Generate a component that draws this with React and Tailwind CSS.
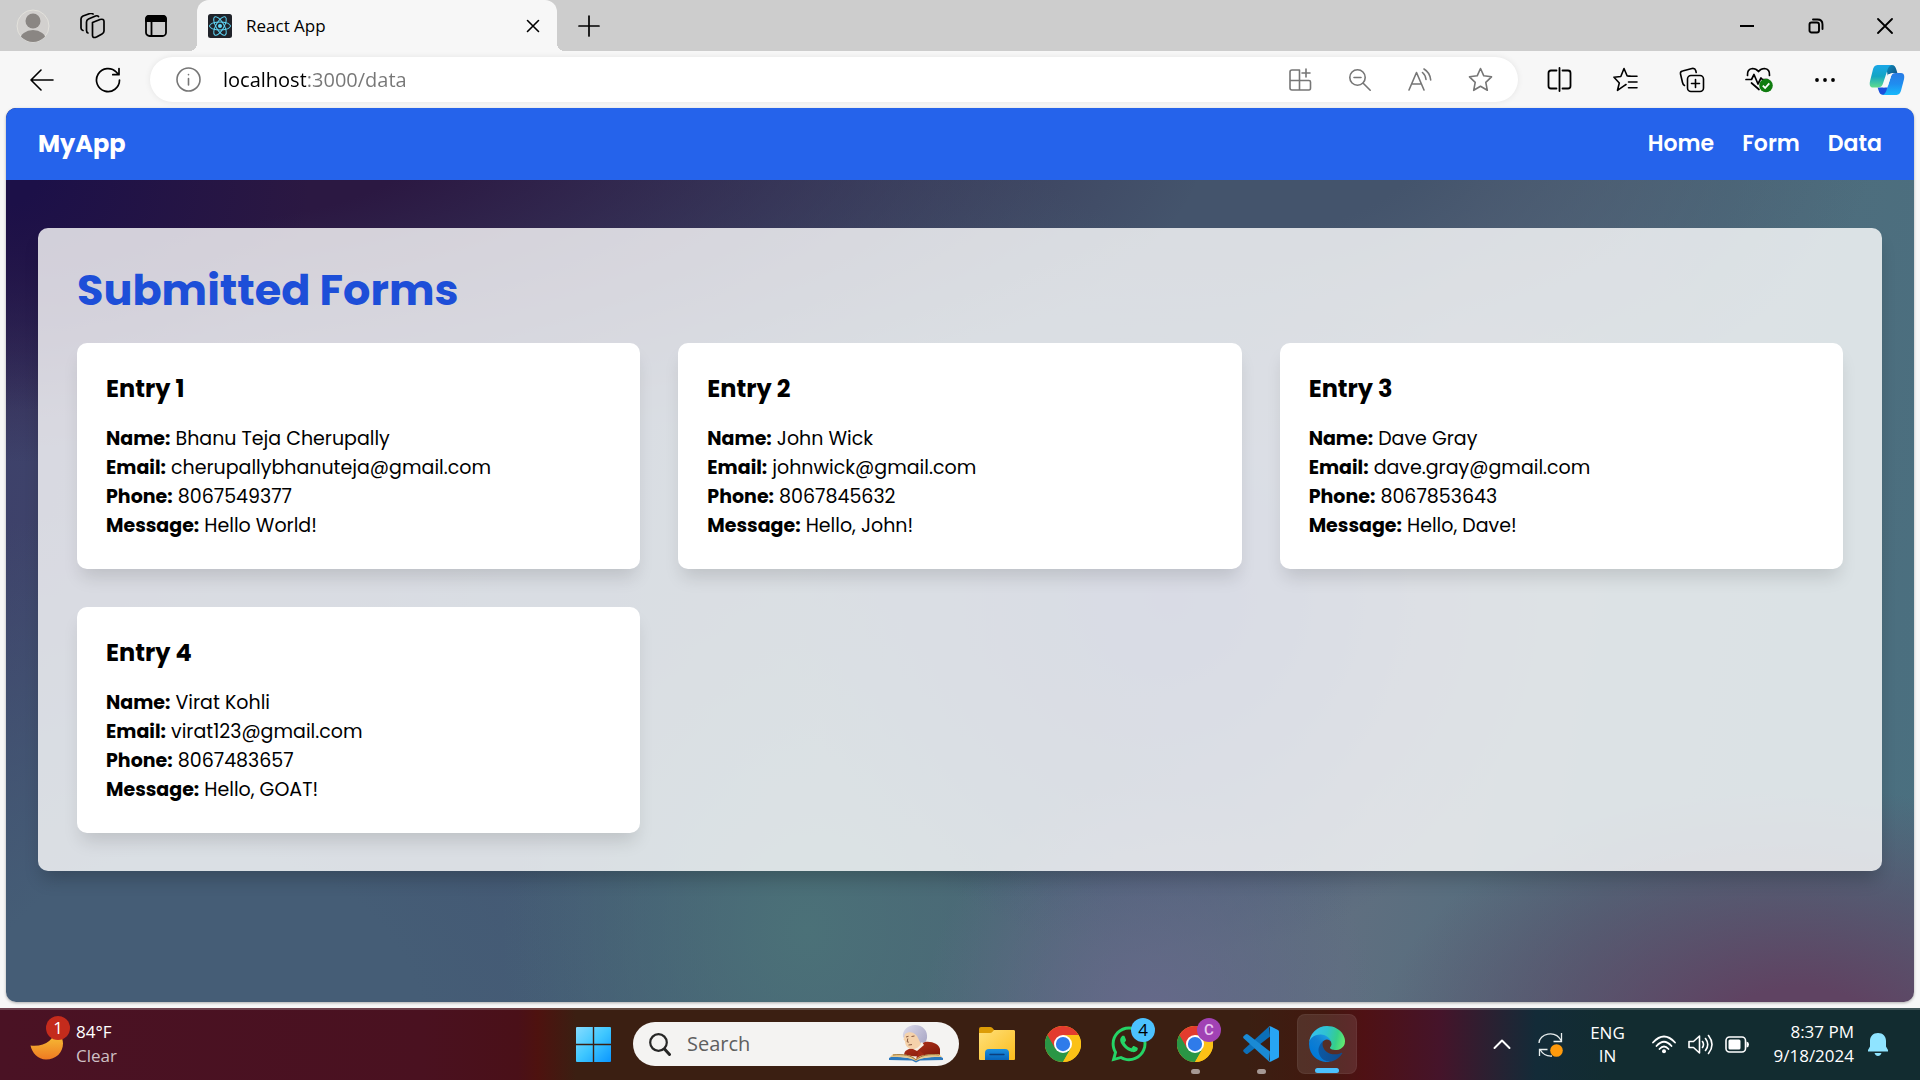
import React from "react";
import { FaWhatsapp } from "react-icons/fa";

const uiFont = "font-['Open_Sans','Noto_Sans',sans-serif]";
const appFont = "font-['Poppins','Inter',sans-serif]";

const entries = [
  { name: "Bhanu Teja Cherupally", email: "cherupallybhanuteja@gmail.com", phone: "8067549377", message: "Hello World!" },
  { name: "John Wick", email: "johnwick@gmail.com", phone: "8067845632", message: "Hello, John!" },
  { name: "Dave Gray", email: "dave.gray@gmail.com", phone: "8067853643", message: "Hello, Dave!" },
  { name: "Virat Kohli", email: "virat123@gmail.com", phone: "8067483657", message: "Hello, GOAT!" },
];

function Line({ size = 24, width = 1.5, className = "", children, box = 24 }) {
  return (
    <svg
      width={size}
      height={size}
      viewBox={`0 0 ${box} ${box}`}
      fill="none"
      stroke="currentColor"
      strokeWidth={width}
      strokeLinecap="round"
      strokeLinejoin="round"
      className={className}
      aria-hidden="true"
    >
      {children}
    </svg>
  );
}

function IconButton({ label, className = "", children }) {
  return (
    <button type="button" aria-label={label} className={`flex shrink-0 items-center justify-center ${className}`}>
      {children}
    </button>
  );
}

function ProfileIcon() {
  return (
    <svg width="34" height="34" viewBox="0 0 34 34" aria-hidden="true">
      <clipPath id="avatar">
        <circle cx="17" cy="17" r="16" />
      </clipPath>
      <circle cx="17" cy="17" r="16" fill="#d2d0ce" stroke="#e3e2dc" />
      <g clipPath="url(#avatar)" fill="#8a8683">
        <circle cx="17" cy="12" r="7.5" />
        <ellipse cx="17" cy="31" rx="13" ry="10" />
      </g>
    </svg>
  );
}

function ReactLogo() {
  return (
    <svg width="24" height="24" viewBox="0 0 24 24" aria-hidden="true">
      <rect width="24" height="24" rx="2.5" fill="#20232a" />
      <g fill="none" stroke="#61dafb" strokeWidth="1">
        <ellipse cx="12" cy="12" rx="10.5" ry="4" />
        <ellipse cx="12" cy="12" rx="10.5" ry="4" transform="rotate(60 12 12)" />
        <ellipse cx="12" cy="12" rx="10.5" ry="4" transform="rotate(120 12 12)" />
      </g>
      <circle cx="12" cy="12" r="2" fill="#61dafb" />
    </svg>
  );
}

function CopilotLogo() {
  return (
    <svg width="36" height="32" viewBox="0 0 38 34" aria-hidden="true">
      <defs>
        <linearGradient id="cpA" x1="0" y1="0" x2="0" y2="1">
          <stop offset="0" stopColor="#1aa7e8" />
          <stop offset="0.5" stopColor="#14a5c4" />
          <stop offset="1" stopColor="#5fdc8c" />
        </linearGradient>
        <linearGradient id="cpB" x1="0" y1="0" x2="0" y2="1">
          <stop offset="0" stopColor="#2a7be4" />
          <stop offset="0.5" stopColor="#1f8df0" />
          <stop offset="1" stopColor="#17b9fb" />
        </linearGradient>
        <linearGradient id="cpC" x1="0" y1="0" x2="1" y2="1">
          <stop offset="0" stopColor="#0d8fc0" />
          <stop offset="1" stopColor="#134a7c" />
        </linearGradient>
      </defs>
      <path d="M18 1h6c3 0 4 2 5 5l1 3.500h-4c-4 0-5 2-6 5z" fill="url(#cpC)" />
      <path d="M20 33h-5c-3 0-4-2-5-5l-1-3h5c4 0 5-2 6-6z" fill="#1b4fdb" />
      <path d="M10 1h14c-3 1-4 3-5 7l-4 12c-1 3-2 5-6 5H4c-3 0-4-3-3-7L4 6c1-4 3-5 6-5z" fill="url(#cpA)" />
      <path d="M28 33H14c3-1 4-3 5-7l4-12c1-3 2-4.500 6-4.500h5c3 0 4 3 3 7l-3 11.500c-1 4-3 5-6 5z" fill="url(#cpB)" />
      <path d="M24 10.500 19.500 25h-4.500l4-12c.7-2 2-2.800 5-2.500z" fill="#f7f7f7" />
    </svg>
  );
}

function TabStrip() {
  return (
    <header className="flex h-[51px] items-center bg-[#cdcdcd] text-black">
      <IconButton label="Profile" className="ml-0.5 w-[62px]">
        <ProfileIcon />
      </IconButton>
      <IconButton label="Workspaces" className="w-[58px]">
        <Line size={26} width={1.700} box={26}>
          <path d="M12.500 9.500 20 6.500q4-1 4 2V18q0 2-2 3l-5.500 3q-4 1.500-4-1.500V12q0-1.800 0-2.500z" />
          <path d="M8 20q-1.500-.5-1.500-2.500V9q0-2 2-3l7-3q2-.7 3 .5" />
          <path d="M3 17.500Q1 17 1 15V6q0-2 2-3l7-2.500q2-.6 3 .5" />
        </Line>
      </IconButton>
      <IconButton label="Tab actions" className="w-[68px]">
        <Line size={24} width={1.800}>
          <rect x="2" y="2" width="20" height="20" rx="3.500" />
          <path d="M2 7V5q0-3 3-3h14q3 0 3 3v2z" fill="currentColor" />
          <path d="M7.500 7v15" />
        </Line>
      </IconButton>
      <div className="relative ml-[7px] flex h-full w-[360px] items-center rounded-t-xl bg-[#f7f7f7] pl-[11px] pr-3">
        <div className="absolute -left-2 bottom-0 h-2 w-2 bg-[radial-gradient(circle_at_0_0,transparent_8px,#f7f7f7_8px)]" />
        <div className="absolute -right-2 bottom-0 h-2 w-2 bg-[radial-gradient(circle_at_100%_0,transparent_8px,#f7f7f7_8px)]" />
        <ReactLogo />
        <span className="ml-3.5 flex-1 text-[17px] leading-6">React App</span>
        <IconButton label="Close tab" className="size-6">
          <Line size={14} width={1.600} box={14}>
            <path d="M1.500 1.500l11 11M12.500 1.500l-11 11" />
          </Line>
        </IconButton>
      </div>
      <IconButton label="New tab" className="w-16">
        <Line size={22} width={1.700} box={22}>
          <path d="M11 1v20M1 11h20" />
        </Line>
      </IconButton>
      <div className="ml-auto flex">
        <IconButton label="Minimize" className="w-[69px]">
          <Line size={16} width={2} box={16}>
            <path d="M1 8h14" strokeLinecap="butt" />
          </Line>
        </IconButton>
        <IconButton label="Restore" className="w-[69px]">
          <Line size={16} width={1.900} box={16}>
            <rect x="1.500" y="4.500" width="9.500" height="10" rx="2" />
            <path d="M5 1.500h4.500q5 0 5 5V11" />
          </Line>
        </IconButton>
        <IconButton label="Close" className="w-[70px]">
          <Line size={16} width={1.800} box={16}>
            <path d="M1 1l14 14M15 1L1 15" />
          </Line>
        </IconButton>
      </div>
    </header>
  );
}

function Toolbar() {
  return (
    <div className="flex h-[57px] items-center bg-[#f7f7f7] text-black">
      <IconButton label="Back" className="ml-[9px] w-[66px]">
        <Line size={24} width={1.600}>
          <path d="M23 12H1M11 2L1 12l10 10" />
        </Line>
      </IconButton>
      <IconButton label="Refresh" className="w-[66px]">
        <Line size={26} width={1.700} box={26}>
          <path d="M24.500 13A11.500 11.500 0 1 1 21.500 5.300l2 2.200M24 1.500v6.200h-6.200" />
        </Line>
      </IconButton>
      <div className="ml-[9px] flex h-[45px] min-w-0 flex-1 items-center rounded-full bg-white pl-[26px] pr-2 text-[#767676] shadow-[0_0_6px_rgba(0,0,0,0.08)]">
        <IconButton label="Site information">
          <Line size={25} width={1.600} box={25}>
            <circle cx="12.500" cy="12.500" r="11.500" />
            <path d="M12.500 11.500v6.500M12.500 7.500v.3" />
          </Line>
        </IconButton>
        <input
          type="text"
          aria-label="Address"
          defaultValue="localhost:3000/data"
          className="ml-[22px] min-w-0 flex-1 bg-[linear-gradient(90deg,#000_83px,#767676_83px)] bg-clip-text text-[20px] leading-7 text-transparent outline-none"
        />
        <IconButton label="Install app" className="w-[60px]">
          <Line size={24} width={1.600}>
            <path d="M11.500 2H4Q2 2 2 4v16q0 2 2 2h17q1.500 0 1.500-2v-6q0-1.500-1.500-1.500H2M11.500 2v20M18 1v8M14 5h8" />
          </Line>
        </IconButton>
        <IconButton label="Zoom" className="w-[60px]">
          <Line size={24} width={1.600}>
            <circle cx="9.500" cy="9.500" r="7.700" />
            <path d="M15.200 15.200l7 7M6 9.500h7" />
          </Line>
        </IconButton>
        <IconButton label="Read aloud" className="w-[60px]">
          <Line size={24} width={1.600}>
            <path d="M1 22L8.500 4.500 16 22M3.800 16h9.500M14.500 4.500q3 2.500 3.500 7M16 1q6 3.500 6.700 11" />
          </Line>
        </IconButton>
        <IconButton label="Add to favorites" className="w-[60px]">
          <Star size={25} />
        </IconButton>
      </div>
      <div className="ml-2 flex items-center">
        <IconButton label="Split screen" className="w-[66px]">
          <Line size={25} width={1.800} box={25}>
            <path d="M9.500 3.500H4Q1.500 3.500 1.500 6v13q0 2.500 2.500 2.500h5.500M15.500 3.500H21q2.500 0 2.500 2.500v13q0 2.500-2.500 2.500h-5.500M12.500 1v23" />
          </Line>
        </IconButton>
        <IconButton label="Favorites" className="w-[66px]">
          <Line size={25} width={1.600} box={25}>
            <path d="M13 17.500l-2.800 1.800-5.700 4 1.800-7.300L1 10.200l6.800-.7L11 1.500l3.200 7.500h3M15.500 9.200H24M15.500 15H24M15.500 20.800H24" />
          </Line>
        </IconButton>
        <IconButton label="Collections" className="w-[67px]">
          <Line size={26} width={1.600} box={26}>
            <rect x="8.500" y="8.500" width="16" height="16" rx="3.500" />
            <path d="M16.500 12.500v8M12.500 16.500h8M5.500 18.500q-1.500-.6-2-3L1.500 7Q1 4.500 3.500 4l9.500-2.500Q16 1 16.700 3.500l.5 2" />
          </Line>
        </IconButton>
        <IconButton label="Browser essentials" className="w-[67px]">
          <svg width="28" height="26" viewBox="0 0 28 26" fill="none" aria-hidden="true">
            <g stroke="currentColor" strokeWidth="1.700" strokeLinecap="round" strokeLinejoin="round">
              <path d="M2.500 8.500Q2 2 7.500 1.500q3.500 0 6 3 2.500-3 6-3 5.500.5 5 7" />
              <path d="M1 12.500h5.500l2.500-5 4 9.500 3-6 1.500 1.500h5M6.500 16l7.500 6.500" />
            </g>
            <circle cx="21" cy="18.500" r="6.800" fill="#107c10" />
            <path d="M17.800 18.700l2.300 2.300 4.200-4.700" stroke="#fff" strokeWidth="1.800" />
          </svg>
        </IconButton>
        <IconButton label="Settings and more" className="w-[66px]">
          <svg width="20" height="4" viewBox="0 0 20 4" fill="currentColor" aria-hidden="true">
            <circle cx="2" cy="2" r="1.900" />
            <circle cx="10" cy="2" r="1.900" />
            <circle cx="18" cy="2" r="1.900" />
          </svg>
        </IconButton>
        <IconButton label="Copilot" className="mr-1 w-[58px]">
          <CopilotLogo />
        </IconButton>
      </div>
    </div>
  );
}

function Star({ size }) {
  return (
    <Line size={size} width={1.600} box={25}>
      <path d="M12.500 1.500l3.300 7.300 7.700 1-5.700 5.500 1.500 8-6.800-4-6.800 4 1.500-8-5.700-5.500 7.700-1z" />
    </Line>
  );
}

function Field({ label, value }) {
  return (
    <p>
      <strong className="font-bold">{label}:</strong> {value}
    </p>
  );
}

function Page() {
  return (
    <div className="flex flex-1 flex-col bg-[#f7f7f7] px-1.5 pb-1.5">
      <div
        className={`flex flex-1 flex-col overflow-hidden rounded-[10px] shadow-[0_1px_3px_rgba(0,0,0,0.3)] ${appFont} bg-[radial-gradient(ellipse_22%_28%_at_94%_104%,#5f4362_20%,transparent),radial-gradient(ellipse_12%_26%_at_60%_102%,#66698a_0%,transparent),radial-gradient(ellipse_20%_40%_at_61%_55%,#3f4c7c_0%,transparent),radial-gradient(ellipse_16%_40%_at_42%_92%,#4b7178_0%,transparent),radial-gradient(ellipse_34%_60%_at_10%_104%,#455d76_35%,transparent),radial-gradient(ellipse_16%_26%_at_0%_8%,#1c1048_10%,transparent),radial-gradient(ellipse_55%_36%_at_8%_4%,#2b1842_25%,transparent),radial-gradient(ellipse_34%_34%_at_64%_4%,#44546c_30%,transparent),linear-gradient(100deg,#3d3f69_0%,#445a74_38%,#4b6575_55%,#5f6f80_72%,#4f6c7c_84%,#4a7080_100%)]`}
      >
        <nav className="flex h-[72px] items-center justify-between bg-[#2563eb] px-8 text-white">
          <a href="#home" className="text-[24px] leading-8 font-bold">MyApp</a>
          <div className="flex gap-7 text-[22px] leading-8 font-semibold">
            <a href="#home">Home</a>
            <a href="#form">Form</a>
            <a href="#data">Data</a>
          </div>
        </nav>
        <main className="px-8 pt-12 text-black">
          <section className="rounded-[10px] bg-white/80 p-[39px] pt-[38px] pb-[38px] shadow-[0_12px_18px_-4px_rgba(0,0,0,0.2)]">
            <h1 className="mb-[29px] text-[43px] leading-12 font-bold text-[#1d4ed8]">Submitted Forms</h1>
            <div className="grid grid-cols-3 gap-[38px]">
              {entries.map((entry, i) => (
                <article
                  key={entry.email}
                  className="rounded-[10px] bg-white p-[29px] text-[19px] leading-[29px] shadow-[0_12px_18px_-4px_rgba(0,0,0,0.13)]"
                >
                  <h2 className="mb-[19px] text-[24px] leading-[33px] font-bold">Entry {i + 1}</h2>
                  <Field label="Name" value={entry.name} />
                  <Field label="Email" value={entry.email} />
                  <Field label="Phone" value={entry.phone} />
                  <Field label="Message" value={entry.message} />
                </article>
              ))}
            </div>
          </section>
        </main>
      </div>
    </div>
  );
}

function StartLogo() {
  return (
    <svg width="35" height="35" viewBox="0 0 35 35" aria-hidden="true">
      <defs>
        <linearGradient id="start" x1="0" y1="0" x2="35" y2="35" gradientUnits="userSpaceOnUse">
          <stop offset="0" stopColor="#86dcff" />
          <stop offset="0.5" stopColor="#3fc7ff" />
          <stop offset="1" stopColor="#0a96ff" />
        </linearGradient>
      </defs>
      <path d="M1 0h15.800v16.800H0V1q0-1 1-1zM18.200 0H34q1 0 1 1v15.800H18.200zM0 18.200h16.800V35H1q-1 0-1-1zM18.200 18.200H35V34q0 1-1 1H18.200z" fill="url(#start)" />
    </svg>
  );
}

function MoonIcon() {
  return (
    <svg width="34" height="32" viewBox="0 0 34 32" aria-hidden="true">
      <defs>
        <linearGradient id="moon" x1="0" y1="0" x2="0" y2="1">
          <stop offset="0" stopColor="#f8cf3a" />
          <stop offset="1" stopColor="#ef7a22" />
        </linearGradient>
      </defs>
      <path d="M24 1C25 12 15 19 .5 17.500 2 25 8 31.500 16 31.500c10 0 17-7 17-16C33 9 29 4 24 1z" fill="url(#moon)" />
    </svg>
  );
}

function ReaderArt() {
  return (
    <svg width="54" height="38" viewBox="0 0 54 38" aria-hidden="true">
      <defs>
        <linearGradient id="coat" x1="0" y1="0" x2="1" y2="1">
          <stop offset="0" stopColor="#b5341c" />
          <stop offset="1" stopColor="#7c1708" />
        </linearGradient>
        <linearGradient id="wig" x1="0" y1="0" x2="1" y2="0.6">
          <stop offset="0" stopColor="#dddbea" />
          <stop offset="1" stopColor="#aeacc9" />
        </linearGradient>
      </defs>
      <path d="M14 12C13 5 19 0 26 0c8 0 13 6 12 13-.5 4-3 6-6 8l-12-3z" fill="url(#wig)" />
      <path d="M15 31c0-6 4-7 9-8l12-6c7-1 14 2 15 7v8z" fill="url(#coat)" />
      <path d="M24 24l9-7 2 3-7 6z" fill="#f6efe4" />
      <path d="M16 9c4-3 9-2 12 2l4 8c-2 3-5 5-8 5-5 0-8-3-8-8l-1.500-1.500z" fill="#f5d2ab" />
      <path d="M17 12l2.500-.7M22.500 11.500l3-.5M18.800 13.500l-.6 3.300 1.600.4M19.500 20l3.500-.4" stroke="#7b4a33" strokeWidth="0.900" fill="none" />
      <path d="M0 33l4-2 23 3 23-3 4 2v2l-23 .5-4 2-4-2L0 35z" fill="#2d78bd" />
      <path d="M27 34l3-9 6 5z" fill="#a32914" />
      <path d="M1 32l3-3c9 0 18 0 23 5 5-5 14-5 23-5l3 3c-9 0-20 0-26 4-6-4-17-4-26-4z" fill="#e7c88d" />
      <path d="M4 30c10-1 18 0 23 5 5-5 13-6 23-5" fill="none" stroke="#8d6127" strokeWidth="0.800" />
    </svg>
  );
}

function FolderIcon() {
  return (
    <svg width="36" height="36" viewBox="0 0 36 36" aria-hidden="true">
      <defs>
        <linearGradient id="folder" x1="0" y1="0" x2="1" y2="1">
          <stop offset="0" stopColor="#ffe07a" />
          <stop offset="1" stopColor="#fbbc1c" />
        </linearGradient>
        <linearGradient id="dock" x1="0" y1="0" x2="0" y2="1">
          <stop offset="0" stopColor="#1a8fdf" />
          <stop offset="1" stopColor="#0764ba" />
        </linearGradient>
      </defs>
      <path d="M0 3q0-2 2-2h9q1.500 0 2.500 1L16 5v5H0z" fill="#dd9c06" />
      <path d="M0 7h11q1.500 0 2.500-1.200L15 4h20q1 0 1 1.500V33q0 1-1 1H1q-1 0-1-1z" fill="url(#folder)" />
      <path d="M6 34V27q0-4 4-4h16q4 0 4 4v7z" fill="url(#dock)" />
      <path d="M11 28.500h14" stroke="#0b3f7d" strokeWidth="1.300" strokeLinecap="round" />
    </svg>
  );
}

function ChromeLogo() {
  return (
    <svg width="36" height="36" viewBox="0 0 48 48" aria-hidden="true">
      <circle cx="24" cy="24" r="24" fill="#fbc116" />
      <path d="M3.200 12A24 24 0 0 0 24 48l10.400-18H24z" fill="#2a9645" />
      <path d="M3.200 12A24 24 0 0 1 44.800 12H24v12l-10.400 6z" fill="#e33b2e" />
      <path d="M44.800 12A24 24 0 0 1 24 48l10.400-18V12z" fill="#fbc116" />
      <circle cx="24" cy="24" r="12" fill="#fff" />
      <circle cx="24" cy="24" r="9.500" fill="#2f7bea" />
    </svg>
  );
}

function CodeLogo() {
  return (
    <svg width="36" height="36" viewBox="0 0 36 36" aria-hidden="true">
      <path d="M26 .5L.8 23.500q-1.300 1.300 0 2.500l1.700 1.500q1.200 1 2.500 0L27 10.500z" fill="#0c6fb8" />
      <path d="M26 35.500L.8 12.500q-1.300-1.300 0-2.500L2.500 8.500q1.200-1 2.500 0L27 25.500z" fill="#1a8ad4" />
      <path d="M26 35.500q1 .5 2 0l7-3.500q1-.5 1-1.500v-25Q36 4.500 35 4L28 .5q-1-.5-2 0 1 .8 1 2v31q0 1.200-1 2z" fill="#27a5f3" />
    </svg>
  );
}

function EdgeLogo() {
  return (
    <svg width="36" height="36" viewBox="4.630 4.920 256 256" aria-hidden="true">
      <defs>
        <linearGradient id="edgeA" x1="63" y1="177" x2="242" y2="177" gradientUnits="userSpaceOnUse">
          <stop offset="0" stopColor="#0c59a4" />
          <stop offset="1" stopColor="#114a8b" />
        </linearGradient>
        <linearGradient id="edgeB" x1="158" y1="100" x2="46" y2="222" gradientUnits="userSpaceOnUse">
          <stop offset="0" stopColor="#1b9de2" />
          <stop offset="0.400" stopColor="#127fd2" />
          <stop offset="1" stopColor="#0078d7" />
        </linearGradient>
        <linearGradient id="edgeC" x1="10" y1="60" x2="260" y2="120" gradientUnits="userSpaceOnUse">
          <stop offset="0" stopColor="#35c1f1" />
          <stop offset="0.450" stopColor="#2fc2cf" />
          <stop offset="0.750" stopColor="#36cf8a" />
          <stop offset="1" stopColor="#66eb6e" />
        </linearGradient>
      </defs>
      <path d="M235.680 195.460a93.730 93.730 0 0 1-10.540 4.710 101.870 101.870 0 0 1-35.900 6.460c-47.320 0-88.540-32.550-88.540-74.320A31.480 31.480 0 0 1 117.130 105c-42.800 1.800-53.800 46.400-53.800 72.530 0 73.880 68.090 81.370 82.760 81.370 7.910 0 19.840-2.300 27-4.560l1.310-.44a128.340 128.340 0 0 0 66.600-52.800 4 4 0 0 0-5.320-5.640z" fill="url(#edgeA)" />
      <path d="M110.340 246.340A79.200 79.200 0 0 1 87.600 225a80.720 80.720 0 0 1 29.530-120c3.120-1.470 8.450-4.130 15.540-4a32.350 32.350 0 0 1 25.690 13 31.880 31.880 0 0 1 6.360 18.660c0-.21 24.460-79.600-80-79.600-43.900 0-80 41.660-80 78.210a130.150 130.150 0 0 0 12.110 56 128 128 0 0 0 156.380 67.110 75.550 75.550 0 0 1-62.780-8z" fill="url(#edgeB)" />
      <path d="M156.940 153.780c-.81 1.050-3.300 2.500-3.300 5.660 0 2.610 1.700 5.120 4.720 7.230 14.380 10 41.490 8.680 41.560 8.680a59.560 59.560 0 0 0 30.270-8.350A61.380 61.380 0 0 0 260.630 114c.26-22.410-8-37.310-11.340-43.910C228.120 28.750 182.350 5 132.630 5a128 128 0 0 0-128 126.200c.48-36.540 36.800-66.050 80-66.050 3.500 0 23.460.34 42 10.070 16.340 8.580 24.900 18.940 30.850 29.210 6.180 10.670 7.280 24.150 7.280 29.520s-2.740 13.330-7.820 19.830z" fill="url(#edgeC)" />
    </svg>
  );
}

function TaskButton({ label, active, running, badge, children }) {
  return (
    <button type="button" aria-label={label} className="flex h-full w-[66px] items-center justify-center">
      <span
        className={`relative flex size-[60px] items-center justify-center rounded-lg ${
          active ? "border border-white/5 bg-white/10" : ""
        }`}
      >
        {children}
        {badge}
        {active && <span className="absolute bottom-0 h-[5px] w-6 rounded-full bg-[#4cc2ff]" />}
        {running && <span className="absolute bottom-0 h-[5px] w-[9px] rounded-full bg-[#a59894]" />}
      </span>
    </button>
  );
}

function Taskbar() {
  return (
    <footer className="grid h-[72px] grid-cols-[1fr_auto_1fr] border-t-2 border-white/20 bg-[linear-gradient(90deg,#4a1224_0%,#4a1120_22%,#4a1018_27%,#4e120f_28%,#3b1f12_30%,#3b1f12_65%,#42180f_69%,#4f1114_71%,#45142a_75%,#132b38_80%,#122c30_84%,#122c30_100%)] bg-origin-border pb-0.5 text-white">
      <button type="button" className="flex items-center justify-self-start pl-[30px] text-left">
        <span className="relative">
          <MoonIcon />
          <span className="absolute -top-3 left-4 flex size-6 items-center justify-center rounded-full bg-[#c42b1c] text-[17px] leading-5">1</span>
        </span>
        <span className="ml-3 text-[17px] leading-6">
          <span className="block">84°F</span>
          <span className="block text-[#cfc0c5]">Clear</span>
        </span>
      </button>
      <div className="flex items-center">
        <TaskButton label="Start">
          <StartLogo />
        </TaskButton>
        <label className="mr-[5px] ml-[7px] flex h-11 w-[326px] items-center rounded-full bg-[#f4f3f2] pl-4 pr-4">
          <svg width="22" height="23" viewBox="0 0 22 23" fill="none" stroke="#262626" aria-hidden="true">
            <circle cx="9.500" cy="9.500" r="8.300" strokeWidth="2.200" />
            <path d="M15.500 16l5 5.500" strokeWidth="3" strokeLinecap="round" />
          </svg>
          <input
            type="text"
            aria-label="Search"
            placeholder="Search"
            className="ml-4 min-w-0 flex-1 bg-transparent text-[20px] leading-7 text-black outline-none placeholder:text-[#5f5f5f]"
          />
          <ReaderArt />
        </label>
        <TaskButton label="File Explorer">
          <FolderIcon />
        </TaskButton>
        <TaskButton label="Chrome">
          <ChromeLogo />
        </TaskButton>
        <TaskButton
          label="WhatsApp, 4 notifications"
          badge={
            <span className="absolute top-1 right-1 flex size-6 items-center justify-center rounded-full bg-[#4cc2ff] text-[17px] leading-5 text-black">4</span>
          }
        >
          <FaWhatsapp size={40} color="#25d366" />
        </TaskButton>
        <TaskButton
          label="Chrome, profile C"
          running
          badge={
            <span className="absolute top-1 right-1 flex size-6 items-center justify-center rounded-full bg-[#a142b4] font-['Roboto',sans-serif] text-[15px] leading-5 font-medium text-[#e9c9ef]">C</span>
          }
        >
          <ChromeLogo />
        </TaskButton>
        <TaskButton label="Visual Studio Code" running>
          <CodeLogo />
        </TaskButton>
        <TaskButton label="Microsoft Edge" active>
          <EdgeLogo />
        </TaskButton>
      </div>
      <div className="flex items-center justify-self-end pr-8">
        <IconButton label="Show hidden icons" className="w-12">
          <Line size={18} width={2} box={18}>
            <path d="M1.500 13L9 5.500l7.500 7.500" />
          </Line>
        </IconButton>
        <IconButton label="Sync status" className="w-12">
          <svg width="25" height="25" viewBox="0 0 25 25" fill="none" aria-hidden="true">
            <path d="M1 11C1 2 17-3 23.500 9M23.500 1v8.500h-8M1.500 24v-6.500h8M2 17.500q4 7 12 6.500" stroke="#e9eeee" strokeWidth="1.300" />
            <circle cx="18.500" cy="18.500" r="6.300" fill="#ff9a0c" />
          </svg>
        </IconButton>
        <button type="button" className="w-[66px] text-center text-[17px] leading-[23px]">
          ENG
          <br />
          IN
        </button>
        <button type="button" aria-label="Network, volume and battery" className="ml-3 flex items-center gap-3">
          <svg width="24" height="19" viewBox="0 0 24 19" fill="none" stroke="#fff" strokeWidth="1.800" strokeLinecap="round" aria-hidden="true">
            <path d="M1 7.500Q12-4.500 23 7.500M4.500 11Q12 2.500 19.500 11M7.500 14Q12 9 16.500 14" />
            <circle cx="12" cy="16.300" r="2" fill="#fff" stroke="none" />
          </svg>
          <svg width="25" height="21" viewBox="0 0 25 21" fill="none" stroke="#fff" strokeWidth="1.600" strokeLinecap="round" strokeLinejoin="round" aria-hidden="true">
            <path d="M1 7.500h4.500L11.500 2v17l-6-5.500H1zM14.500 7.500q2 3 0 6M17.500 4.500q4.500 6 0 12M20.500 1.500q7 9 0 18" />
          </svg>
          <svg width="24" height="17" viewBox="0 0 24 17" fill="none" aria-hidden="true">
            <rect x="1" y="1" width="19.500" height="15" rx="3.500" stroke="#fff" strokeWidth="1.600" />
            <rect x="3.500" y="3.500" width="12" height="10" rx="1.500" fill="#fff" />
            <path d="M21.500 5.500q2.500.5 2.500 3t-2.500 3z" fill="#fff" />
          </svg>
        </button>
        <button type="button" className="ml-6 text-right text-[17px] leading-6">
          8:37 PM
          <br />
          9/18/2024
        </button>
        <IconButton label="Notifications" className="ml-3.5">
          <svg width="20" height="23" viewBox="0 0 20 23" fill="#8fe4ff" aria-hidden="true">
            <path d="M10 0C5 0 2 3.500 2 8v5.500L0 17v1.500h20V17l-2-3.500V8c0-4.500-3-8-8-8zM6.500 20Q7.500 23 10 23t3.500-3z" />
          </svg>
        </IconButton>
      </div>
    </footer>
  );
}

export default function App() {
  return (
    <div className={`flex min-h-screen flex-col bg-[#f7f7f7] ${uiFont}`}>
      <TabStrip />
      <Toolbar />
      <Page />
      <div className="bg-[#2c1a1c]">
        <Taskbar />
      </div>
    </div>
  );
}
